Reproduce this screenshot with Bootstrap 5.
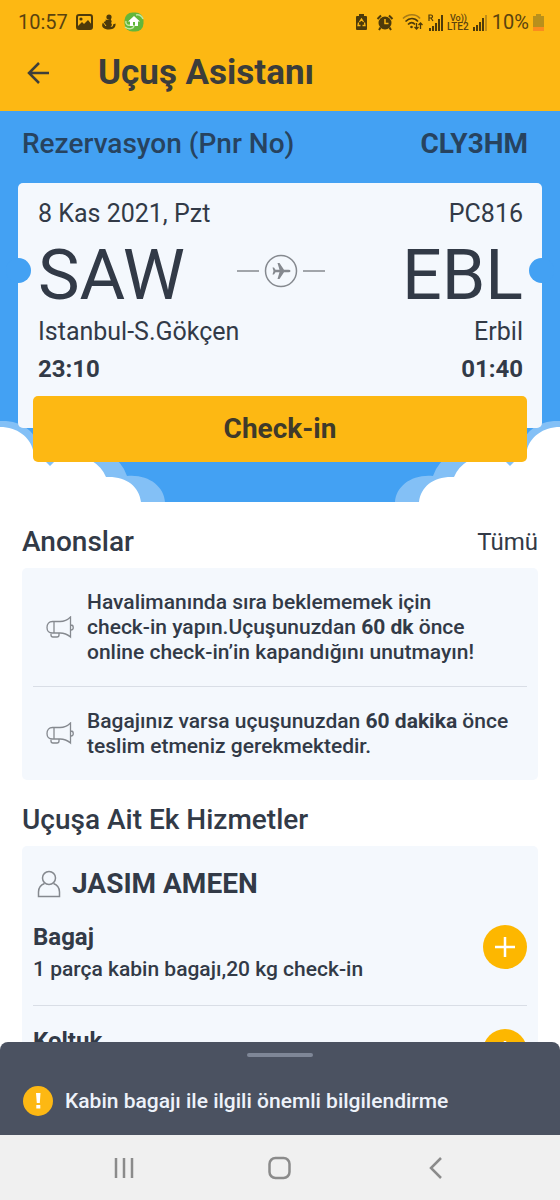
<!DOCTYPE html>
<html lang="tr">
<head>
<meta charset="utf-8">
<meta name="viewport" content="width=device-width, initial-scale=1">
<title>Uçuş Asistanı</title>
<link href="https://cdn.jsdelivr.net/npm/bootstrap@5.3.0/dist/css/bootstrap.min.css" rel="stylesheet">
<script src="https://cdn.jsdelivr.net/npm/bootstrap@5.3.0/dist/js/bootstrap.bundle.min.js" defer></script>
<style>
  :root { --sun: #fdb813; --sky: #43a1f3; --ink: #323a47; --panel: #f4f8fd; --sheet: #4b5261; }
  body { font-family: Roboto, "Liberation Sans", sans-serif; color: var(--ink); background: #fff; }
  svg { display: block; flex: none; }
  a { color: inherit; text-decoration: none; }

  .status-bar { height: 42px; padding: 2px 16px 0 18px; font-size: 20px; line-height: 24px; color: #5a430f; }
  .title-bar { height: 69px; padding: 0 26px 8px 24px; color: #3b3d3b; }
  .title-bar h1 { font-size: 35px; line-height: 44px; margin: 0 0 0 46px; font-weight: 700; }
  .top-area { background: var(--sun); }

  .hero { background: var(--sky); padding: 15px 18px 40px; }
  .pnr-row { font-size: 28px; line-height: 36px; padding: 0 14px 0 4px; margin-bottom: 21px; color: #27435f; font-weight: 500; }
  .ticket { background: var(--panel); border-radius: 5px; height: 245px; padding: 16px 19px 0 20px; font-size: 25px; line-height: 30px; }
  .ticket-codes { font-size: 70px; line-height: 80px; margin: 6px 0 2px; font-weight: 400; }
  .ticket-times { font-size: 24px; font-weight: 700; margin-top: 7px; }
  .notch { width: 25px; height: 25px; border-radius: 50%; background: var(--sky); top: 75px; }
  .notch-start { left: -12px; }
  .notch-end { right: -12px; }
  .btn-checkin { background: var(--sun); border: 0; border-radius: 5px; height: 66px; margin: -32px 15px 0; font-size: 28px; font-weight: 700; color: #3f3a2a; z-index: 2; }
  .cloud { bottom: 0; }

  .content { padding: 22px 22px 0; }
  .section-title { font-size: 28px; line-height: 36px; margin: 0; font-weight: 500; }
  .section-next { margin-top: 22px; }
  .all-link { font-size: 24px; line-height: 36px; }
  .panel { background: var(--panel); border-radius: 5px; padding: 0 11px; }
  .notice { font-size: 21px; line-height: 25px; font-weight: 500; padding: 22px 0 21px 13px; gap: 13px; }
  .notice strong { font-weight: 700; }
  .ruled { border-bottom: 1px solid #d9dee6; }
  .pax { font-size: 28px; line-height: 36px; font-weight: 700; margin: 0; gap: 11px; padding: 20px 0 0 4px; }
  .service h3 { font-size: 24px; line-height: 32px; font-weight: 700; margin: 0; }
  .service p { font-size: 21px; line-height: 32px; margin: 0; font-weight: 500; }
  .service { padding: 19px 0 20px; }
  .btn-add { width: 44px; height: 44px; border-radius: 50%; background: #fdb700; border: 0; padding: 0; margin-top: 4px; }

  .sheet { background: var(--sheet); border-radius: 8px 8px 0 0; padding: 11px 23px 19px; color: #eef2fa; font-size: 21px; line-height: 30px; font-weight: 500; }
  .grip { width: 66px; height: 4px; border-radius: 2px; background: #7f8797; margin-bottom: 29px; }
  .sys-nav { background: #f0f0f0; height: 65px; }
  .sys-nav button { background: none; border: 0; padding: 0; color: #8b8b8b; }
</style>
</head>
<body>
<div class="vh-100 d-flex flex-column overflow-hidden">
  <header class="top-area flex-shrink-0">
    <div class="status-bar d-flex align-items-center justify-content-between">
      <div class="d-flex align-items-center">
        <span>10:57</span>
        <svg class="ms-2" width="17" height="16" viewBox="0 0 17 16"><rect x="1" y="1" width="15" height="14" rx="2" fill="none" stroke="#4d3a0a" stroke-width="2"/><circle cx="5" cy="5" r="1.6" fill="#4d3a0a"/><path d="M2 12l4-4 2 2 4-4 4 5v3H2z" fill="#4d3a0a"/></svg>
        <svg class="ms-2" width="15" height="16" viewBox="0 0 15 16" fill="#4d3a0a"><circle cx="8" cy="3" r="2.6"/><path d="M10 4c-1 2 2 3 0 5 1.500 1 1 3-.5 4 2 0 3-1 2.500-2.500l2.500-1c.5 3-1.500 6-6.500 6C3 15.500 0 13 1.500 9.500c1.500-3 4-1 3-4C6 6.500 8 6 10 4z"/><path d="M2 8l3 4" stroke="#fdb813"/></svg>
        <svg class="ms-2" width="20" height="20" viewBox="0 0 20 20"><rect x=".5" y=".5" width="19" height="19" rx="8" fill="#63b63b"/><path d="M1 15c4 3 9 2 9-2M12 3c3-1 6 1 7 4M2 9c-1 3 2 5 4 4" stroke="#bfe6a0" stroke-width="1.500" fill="none"/><path d="M10 4l6 5.500h-2V14h-3v-4H9v4H6V9.500H4z" fill="#fff"/></svg>
      </div>
      <div class="d-flex align-items-center gap-1">
        <svg class="me-1" width="13" height="18" viewBox="0 0 13 18"><path d="M4 1h5v2h2q1 0 1 1v12q0 1-1 1H2q-1 0-1-1V4q0-1 1-1h2z" fill="#4d3a0a"/><path d="M4.500 9l2-3 2 3M9.500 9.500l.5 3H7.500M3.500 9.500l-.5 3h2.500" stroke="#fdb813" stroke-width="1.300" fill="none"/></svg>
        <svg class="me-1" width="18" height="17" viewBox="0 0 18 17"><circle cx="9" cy="9" r="6.500" fill="#4d3a0a"/><path d="M1.500 5L5 1.500M16.500 5L13 1.500M4.500 13.500L3 16M13.500 13.500L15 16" stroke="#4d3a0a" stroke-width="2"/><path d="M9 5v4.500h3.500" stroke="#fdb813" stroke-width="1.500" fill="none"/></svg>
        <svg width="22" height="18" viewBox="0 0 22 18" fill="none" stroke-width="1.700"><path d="M1 5.500c5-5 13-5 17 0" stroke="#a77b18"/><path d="M3.500 8.500c4-4 9-4 12.500 0M6 11.500c2.500-2.500 5-2.500 7 0" stroke="#4d3a0a"/><circle cx="9.500" cy="14" r="1.300" fill="#4d3a0a"/><path d="M14.500 10v6m-2-2l2 2 2-2M18.500 16v-6m-2 2l2-2 2 2" stroke="#4d3a0a" stroke-width="1.300"/></svg>
        <svg width="15" height="17" viewBox="0 0 15 17"><path d="M1 7V1h2q1.500 0 1.500 1.500T3 4H1m2 0l2 3" stroke="#4d3a0a" stroke-width="1.200" fill="none"/><path d="M1 14h2v3H1zM4 12h2v5H4zM7 9h2v8H7zM10 5h2v12h-2zM13 1h2v16h-2z" fill="#4d3a0a"/></svg>
        <svg width="22" height="18" viewBox="0 0 22 18" fill="#5a430f" font-family="Roboto, sans-serif" font-weight="500"><text x="3" y="8" font-size="9">Vo))</text><text x="0" y="17" font-size="10">LTE2</text></svg>
        <svg width="15" height="17" viewBox="0 0 15 17" fill="#4d3a0a"><path d="M0 13h2v4H0zM3 11h2v6H3zM6 8h2v9H6zM9 4h2v13H9z"/><path d="M12 1h2v16h-2z" fill="#c08d17"/></svg>
        <span>10%</span>
        <svg width="11" height="18" viewBox="0 0 11 18"><path d="M3 1h5v2h3v15H0V3h3z" fill="#b8901c"/><path d="M0 14h11v4H0z" fill="#fb8c1e"/></svg>
      </div>
    </div>
    <div class="title-bar d-flex align-items-center">
      <button type="button" class="btn p-0 border-0" aria-label="Geri"><svg width="28" height="24" viewBox="0 0 28 24" fill="none" stroke="#3f3f3a" stroke-width="2.500"><path d="M25 12H5M15 2L5 12l10 10"/></svg></button>
      <h1>Uçuş Asistanı</h1>
    </div>
  </header>

  <main class="flex-fill overflow-hidden">
    <section class="hero position-relative">
      <div class="pnr-row d-flex justify-content-between"><span>Rezervasyon (Pnr No)</span><strong>CLY3HM</strong></div>
      <svg class="cloud position-absolute start-0" width="168" height="82" viewBox="0 0 168 82"><path d="M0 1C20 0 38 10 40 34H108Q122 41 127 56C148 54 164 66 165 82H0Z" fill="#83c0f6"/><path d="M0 7C17 7 30 17 33 30L46 42 50 46 55 41H92Q102 47 106 57C126 56 139 66 141 82H0Z" fill="#fff"/></svg>
      <svg class="cloud position-absolute end-0" width="168" height="82" viewBox="0 0 168 82"><g transform="translate(168 0) scale(-1 1)"><path d="M0 1C20 0 38 10 40 34H108Q122 41 127 56C148 54 164 66 165 82H0Z" fill="#83c0f6"/><path d="M0 7C17 7 30 17 33 30L46 42 50 46 55 41H92Q102 47 106 57C126 56 139 66 141 82H0Z" fill="#fff"/></g></svg>
      <div class="ticket position-relative">
        <span class="notch notch-start position-absolute"></span><span class="notch notch-end position-absolute"></span>
        <div class="d-flex justify-content-between"><span>8 Kas 2021, Pzt</span><span>PC816</span></div>
        <div class="ticket-codes row g-0 align-items-center">
          <span class="col">SAW</span>
          <svg class="col-auto mb-2" width="88" height="34" viewBox="0 0 88 34" fill="none" stroke="#85898f" stroke-width="1.500"><path d="M0 17h22M66 17h22"/><circle cx="44" cy="17" r="15.500"/><path d="M53.500 17q0 1.300-2 1.300h-4.500L42.500 25h-2l2-6.700h-4L37 20.500h-1.500L36.500 17l-1-3.500H37l1.500 2.200h4L40.500 9h2l4.500 6.700h4.500q2 0 2 1.300z" fill="#85898f" stroke="none"/></svg>
          <span class="col text-end">EBL</span>
        </div>
        <div class="d-flex justify-content-between"><span>Istanbul-S.Gökçen</span><span>Erbil</span></div>
        <div class="ticket-times d-flex justify-content-between"><span>23:10</span><span>01:40</span></div>
      </div>
      <div class="d-grid"><button type="button" class="btn btn-checkin position-relative">Check-in</button></div>
    </section>

    <div class="content">
      <div class="d-flex justify-content-between"><h2 class="section-title">Anonslar</h2><a href="#" class="all-link">Tümü</a></div>
      <div class="panel mt-2">
        <div class="notice ruled d-flex align-items-center">
          <svg width="28" height="24" viewBox="0 0 28 24" fill="none" stroke="#85898f" stroke-width="1.300"><path d="M8 5.500H6.500C3 5.500 1 8 1 11.500S3 17 6.500 17H8zM8 5.500h6c4 0 7-1 10.500-4.500v20C21 18 18 17 14 17H8M25 9c3 0 3 5 0 5M5 17v2q0 2 2 2h4q2 0 2-2v-2"/></svg>
          <div>Havalimanında sıra beklememek için<br>check-in yapın.Uçuşunuzdan <strong>60 dk</strong> önce<br>online check-in’in kapandığını unutmayın!</div>
        </div>
        <div class="notice d-flex align-items-center">
          <svg width="28" height="24" viewBox="0 0 28 24" fill="none" stroke="#85898f" stroke-width="1.300"><path d="M8 5.500H6.500C3 5.500 1 8 1 11.500S3 17 6.500 17H8zM8 5.500h6c4 0 7-1 10.500-4.500v20C21 18 18 17 14 17H8M25 9c3 0 3 5 0 5M5 17v2q0 2 2 2h4q2 0 2-2v-2"/></svg>
          <div>Bagajınız varsa uçuşunuzdan <strong>60 dakika</strong> önce<br>teslim etmeniz gerekmektedir.</div>
        </div>
      </div>
      <h2 class="section-title section-next">Uçuşa Ait Ek Hizmetler</h2>
      <div class="panel mt-2">
        <div class="pax d-flex align-items-center">
          <svg width="24" height="28" viewBox="0 0 24 28" fill="none" stroke="#85898f" stroke-width="1.500"><circle cx="12" cy="8" r="6.500"/><path d="M7.500 13.500C3.500 15 1.500 18 1.500 22v4.500h21V22c0-4-2-7-6-8.500"/></svg>
          <span>JASIM AMEEN</span>
        </div>
        <div class="service ruled d-flex justify-content-between align-items-start">
          <div><h3>Bagaj</h3><p>1 parça kabin bagajı,20 kg check-in</p></div>
          <button type="button" class="btn-add d-flex align-items-center justify-content-center" aria-label="Bagaj ekle"><svg width="20" height="20" viewBox="0 0 20 20" stroke="#fff" stroke-width="2.500"><path d="M0 10h20M10 0v20"/></svg></button>
        </div>
        <div class="service d-flex justify-content-between align-items-start">
          <div><h3>Koltuk</h3></div>
          <button type="button" class="btn-add d-flex align-items-center justify-content-center" aria-label="Koltuk ekle"><svg width="20" height="20" viewBox="0 0 20 20" stroke="#fff" stroke-width="2.500"><path d="M0 10h20M10 0v20"/></svg></button>
        </div>
      </div>
    </div>
  </main>

  <aside class="sheet flex-shrink-0 position-relative">
    <div class="grip mx-auto"></div>
    <div class="d-flex align-items-center">
      <svg width="30" height="30" viewBox="0 0 30 30"><circle cx="15" cy="15" r="15" fill="#fdb813"/><path d="M13 7h4.500l-.7 10h-3zM13.300 19h4v3.500h-4z" fill="#fff"/></svg>
      <span class="ms-2 ps-1">Kabin bagajı ile ilgili önemli bilgilendirme</span>
    </div>
  </aside>
  <nav class="sys-nav flex-shrink-0 d-flex align-items-center justify-content-around px-5">
    <button type="button" aria-label="Son uygulamalar"><svg width="22" height="22" viewBox="0 0 22 22" stroke="currentColor" stroke-width="2.500"><path d="M2 1v20M10 1v20M18 1v20"/></svg></button>
    <button type="button" aria-label="Ana ekran"><svg width="24" height="24" viewBox="0 0 24 24" fill="none" stroke="currentColor" stroke-width="2.500"><rect x="1.500" y="2" width="20" height="20" rx="6"/></svg></button>
    <button type="button" aria-label="Geri"><svg width="22" height="22" viewBox="0 0 22 22" fill="none" stroke="currentColor" stroke-width="2.500"><path d="M17 1L7 11l10 10"/></svg></button>
  </nav>
</div>
</body>
</html>
